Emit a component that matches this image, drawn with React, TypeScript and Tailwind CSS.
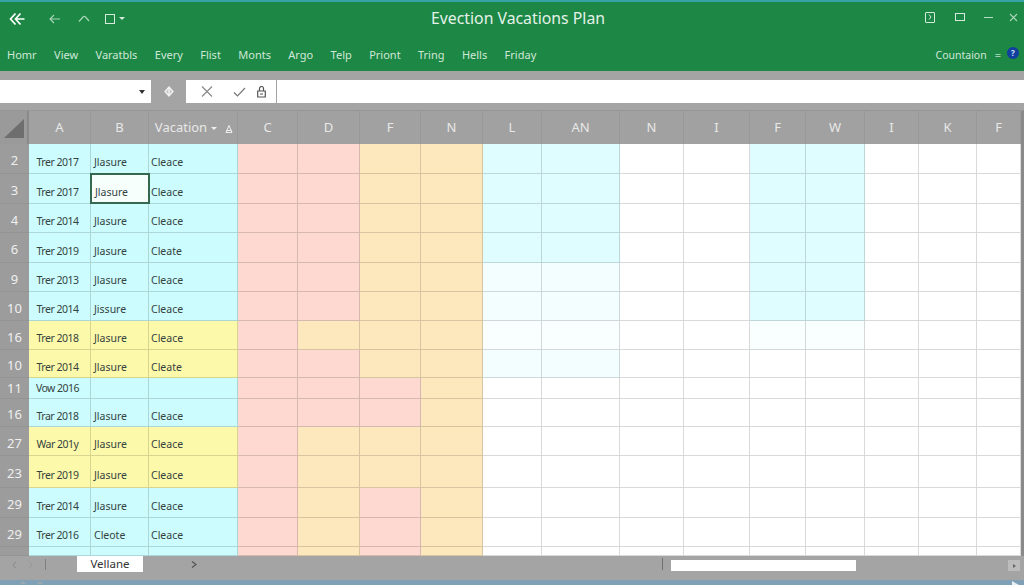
import React from 'react';

const menuItems = ['Homr', 'View', 'Varatbls', 'Every', 'Flist', 'Monts', 'Argo', 'Telp', 'Priont', 'Tring', 'Hells', 'Friday'];
const columns = ['A', 'B', 'Vacation', 'C', 'D', 'F', 'N', 'L', 'AN', 'N', 'I', 'F', 'W', 'I', 'K', 'F'];

const tones: Record<string, string> = {
    c: 'bg-[#ccfcfd]',
    y: 'bg-[#fdf9aa]',
    p: 'bg-[#fdd9d1]',
    o: 'bg-[#fde8be]',
    l: 'bg-[#dffdff]',
    f: 'bg-[#f2feff]',
    v: 'bg-[#f9feff]',
    w: 'bg-white',
};

// left = tone of A, B and Vacation; mid = C D F N; rest = L AN N I F W I K F
const rows = [
    { n: '2', a: 'Trer 2017', b: 'Jlasure', v: 'Cleace', left: 'c', mid: 'ppoo', rest: 'llwwllwww' },
    { n: '3', a: 'Trer 2017', b: 'Jlasure', v: 'Cleace', left: 'c', mid: 'ppoo', rest: 'llwwllwww' },
    { n: '4', a: 'Trer 2014', b: 'Jlasure', v: 'Cleace', left: 'c', mid: 'ppoo', rest: 'llwwllwww' },
    { n: '6', a: 'Trer 2019', b: 'Jlasure', v: 'Cleate', left: 'c', mid: 'ppoo', rest: 'llwwllwww' },
    { n: '9', a: 'Trer 2013', b: 'Jlasure', v: 'Cleace', left: 'c', mid: 'ppoo', rest: 'ffwwllwww' },
    { n: '10', a: 'Trer 2014', b: 'Jissure', v: 'Cleace', left: 'c', mid: 'ppoo', rest: 'ffwwllwww' },
    { n: '16', a: 'Trer 2018', b: 'Jlasure', v: 'Cleace', left: 'y', mid: 'pooo', rest: 'vvwwvvwww' },
    { n: '10', a: 'Trer 2014', b: 'Jlasure', v: 'Cleate', left: 'y', mid: 'ppoo', rest: 'ffwwwwwww' },
    { n: '11', a: 'Vow 2016', b: '', v: '', left: 'c', mid: 'pppo', rest: 'wwwwwwwww' },
    { n: '16', a: 'Trar 2018', b: 'Jlasure', v: 'Cleace', left: 'c', mid: 'pppo', rest: 'wwwwwwwww' },
    { n: '27', a: 'War 201y', b: 'Jlasure', v: 'Cleace', left: 'y', mid: 'pooo', rest: 'wwwwwwwww' },
    { n: '23', a: 'Trer 2019', b: 'Jlasure', v: 'Cleace', left: 'y', mid: 'pooo', rest: 'wwwwwwwww' },
    { n: '29', a: 'Trer 2014', b: 'Jlasure', v: 'Cleace', left: 'c', mid: 'popo', rest: 'wwwwwwwww' },
    { n: '29', a: 'Trer 2016', b: 'Cleote', v: 'Cleace', left: 'c', mid: 'popo', rest: 'wwwwwwwww' },
    { n: '29', a: '', b: '', v: '', left: 'c', mid: 'popo', rest: 'wwwwwwwww' },
];

const lineCell = 'border-r border-b border-black/15';

function TitleIcons() {
    return (
        <div className="flex items-center w-[431px] pl-[9px]">
            <svg width="16" height="14" viewBox="0 0 16 14" fill="none" stroke="#fff" strokeWidth="1.7">
                <path d="M6.5 1.5 1.5 7l5 5.5M11.5 1.5 6.5 7l5 5.500M7 7h8.500" />
            </svg>
            <svg className="ml-[24px]" width="12" height="10" viewBox="0 0 12 10" fill="none" stroke="#a9d6b8" strokeWidth="1.1">
                <path d="M5 1 1 5l4 4M1 5h10" />
            </svg>
            <svg className="ml-[17px]" width="12" height="8" viewBox="0 0 12 8" fill="none" stroke="#a9d6b8" strokeWidth="1.2">
                <path d="M1 6.500 5 2c1-1 1.600-1 2.500 0L11 6" />
            </svg>
            <div className="ml-[15px] w-[10px] h-[10px] border border-[#d6eadd]" />
            <div className="ml-[4px] w-0 h-0 border-x-[3px] border-x-transparent border-t-[3px] border-t-[#d6eadd]" />
        </div>
    );
}

function WindowButtons() {
    return (
        <div className="ml-auto flex items-center pr-[6px] pb-[3px]">
            <div className="w-[10px] h-[11px] border border-[#d6eadd] rounded-[1px] flex items-center justify-center">
                <svg width="4" height="6" viewBox="0 0 4 6" fill="none" stroke="#d6eadd" strokeWidth="1">
                    <path d="m1 .5 2 2.500-2 2.500" />
                </svg>
            </div>
            <div className="ml-[20px] w-[10px] h-[8px] border border-[#d6eadd]" />
            <div className="ml-[19px] w-[9px] h-px bg-[#b9dcc6]" />
            <svg className="ml-[16px]" width="9" height="9" viewBox="0 0 9 9" fill="none" stroke="#a9d6b8" strokeWidth="1.1">
                <path d="m1 1 7 7M8 1 1 8" />
            </svg>
        </div>
    );
}

export default function App() {
    return (
        <div className="w-[1024px] h-[585px] overflow-hidden flex flex-col bg-[#a4a4a4] font-['Noto_Sans',sans-serif]">
            <div className="h-[2px] bg-[#35a3a6]" />

            {/* title + menu */}
            <div className="h-[69px] bg-[#1d8745] text-white flex flex-col">
                <div className="h-[33px] flex items-center">
                    <TitleIcons />
                    <span className="text-[15.800px] leading-none text-[#e4f2e9] pt-[1px]">Evection Vacations Plan</span>
                    <WindowButtons />
                </div>
                <div className="h-[36px] flex items-center pl-[7px] pr-[5px] pt-[5px] text-[11px] text-[#cfe8d8]">
                    <div className="flex items-center gap-[17.400px]">
                        {menuItems.map((item) => (
                            <span key={item}>{item}</span>
                        ))}
                    </div>
                    <span className="ml-auto text-[10.500px]">Countaion</span>
                    <span className="ml-[8px] text-[#9fd0b1]">=</span>
                    <div className="ml-[6px] mb-[5px] w-[12px] h-[12px] rounded-full bg-[#123f9e] text-[8px] leading-[12px] text-center text-[#cfe0ff] font-bold">
                        ?
                    </div>
                </div>
            </div>

            {/* formula bar */}
            <div className="h-[39px] pt-[9px] pb-[7px] flex items-stretch">
                <div className="w-[151px] bg-white flex items-center justify-end pr-[6px]">
                    <div className="w-0 h-0 border-x-[3px] border-x-transparent border-t-[4px] border-t-[#333]" />
                </div>
                <div className="w-[35px] flex items-center justify-center">
                    <svg width="10" height="11" viewBox="0 0 10 11" fill="#c9c9c9" stroke="#f2f2f2" strokeWidth="1.300">
                        <path d="M5 1 9 5.500 5 10 1 5.500zM5 1v9" />
                    </svg>
                </div>
                <div className="w-[90px] bg-white flex items-center">
                    <svg className="ml-[15px]" width="12" height="11" viewBox="0 0 12 11" fill="none" stroke="#8a8a8a" strokeWidth="1.2">
                        <path d="m1 .5 10 10M11 .5l-10 10" />
                    </svg>
                    <svg className="ml-[20px]" width="13" height="10" viewBox="0 0 13 10" fill="none" stroke="#777" strokeWidth="1.2">
                        <path d="m1 5.500 3.500 3.500L12 1" />
                    </svg>
                    <svg className="ml-[11px]" width="9" height="12" viewBox="0 0 9 12" fill="none" stroke="#555" strokeWidth="1.200">
                        <path d="M.7 5h7.600v6H.7zM2.500 5V2.500a2 2 0 0 1 4 0V5M3 8h3" />
                    </svg>
                </div>
                <div className="flex-1 ml-px bg-white" />
            </div>

            {/* sheet */}
            <div className="h-[446px] flex overflow-hidden border-t border-t-[#969696]">
                <div className="w-[1021px] grid grid-cols-[29px_62px_58px_89px_60px_62px_61px_62px_59px_78px_64px_66px_56px_59px_54px_58px_44px] grid-rows-[33px_30px_30px_29px_30px_29px_29px_29px_28px_21px_28px_29px_32px_30px_29px_9px]">
                    <div className="bg-[#9a9a9a] border-r-2 border-[#8a8a8a] flex items-end justify-center pb-[6px]">
                        <div className="w-0 h-0 border-l-[20px] border-l-transparent border-b-[19px] border-b-[#6e6e6e]" />
                    </div>
                    {columns.map((col, i) => (
                        <div key={i} className="bg-[#a1a1a1] border-r border-black/5 flex items-center justify-center pt-[1px] text-[13px] text-[#e8e8e8]">
                            {col === 'Vacation' ? (
                                <>
                                    <span className="ml-[2px]">{col}</span>
                                    <div className="ml-[4px] w-0 h-0 border-x-[3px] border-x-transparent border-t-[3px] border-t-[#f0f0f0]" />
                                    <svg className="ml-[8px] mt-[2px]" width="8" height="8" viewBox="0 0 8 8" fill="none" stroke="#f0f0f0" strokeWidth="1">
                                        <path d="M4 .5 1 7.500h6zM1.500 5.500h5" />
                                    </svg>
                                </>
                            ) : (
                                col
                            )}
                        </div>
                    ))}

                    {rows.map((row, r) => {
                        const short = r === 8;
                        const last = r === 14;
                        const cellText = `flex items-center ${short ? 'pt-[2px]' : 'pt-2'} text-[10.500px] text-[#35433f] whitespace-nowrap`;
                        const left = tones[row.left];
                        return (
                            <React.Fragment key={r}>
                                <div className={`bg-[#9c9c9c] border-b border-black/5 flex justify-center ${last ? 'items-start pt-[6px]' : 'items-center'} ${!last && !short ? 'pt-1' : ''} text-[13px] leading-none text-[#efefef] overflow-hidden`}>
                                    {row.n}
                                </div>
                                <div className={`${left} ${lineCell} ${cellText} justify-center pr-1 tracking-[-0.500px]`}>{row.a}</div>
                                <div className={`${left} ${lineCell} ${cellText} pl-[3px] relative`}>
                                    {row.b}
                                    {r === 1 && <div className="absolute -inset-px -right-[2px] bg-[#f6fffc] border-2 border-[#34694f] flex items-center pl-[3px] pt-[8px]">{row.b}</div>}
                                </div>
                                <div className={`${left} ${lineCell} ${cellText} pl-[2px]`}>{row.v}</div>
                                {row.mid.split('').map((t, i) => (
                                    <div key={`m${i}`} className={`${tones[t]} ${lineCell}`} />
                                ))}
                                {row.rest.split('').map((t, i) => (
                                    <div key={`e${i}`} className={`${tones[t]} ${lineCell}`} />
                                ))}
                            </React.Fragment>
                        );
                    })}
                </div>
                <div className="flex-1 bg-[#8a8a8a]" />
            </div>

            {/* sheet tabs + scrollbar */}
            <div className="h-[24px] bg-[#a4a4a4] flex items-start">
                <div className="h-[17px] flex items-center pl-[12px]">
                    <svg width="5" height="8" viewBox="0 0 5 8" fill="none" stroke="#888" strokeWidth="1">
                        <path d="M4 .5 1 4l3 3.500" />
                    </svg>
                    <svg className="ml-[11px]" width="5" height="8" viewBox="0 0 5 8" fill="none" stroke="#999" strokeWidth="1">
                        <path d="m1 .5 3 3.500-3 3.500" />
                    </svg>
                    <div className="ml-[12px] w-px h-[11px] bg-[#7e7e7e]" />
                </div>
                <div className="ml-[31px] w-[66px] h-[16px] bg-white text-[11.500px] leading-[16px] text-center text-[#333]">Vellane</div>
                <svg className="ml-[48px] mt-[5px]" width="6" height="7" viewBox="0 0 6 7" fill="none" stroke="#555" strokeWidth="1.3">
                    <path d="m1 .5 4 3-4 3" />
                </svg>
                <div className="ml-[465px] mt-[2px] w-px h-[12px] bg-[#707070]" />
                <div className="ml-[8px] mt-[4px] w-[185px] h-[11px] bg-white" />
                <div className="ml-auto mr-[4px] mt-[4px] w-[12px] h-[11px] bg-[#bcbcbc] flex items-center justify-center">
                    <div className="w-0 h-0 border-y-[2px] border-y-transparent border-l-[3px] border-l-[#666]" />
                </div>
            </div>

            {/* status strip */}
            <div className="flex-1 bg-[#7fa0b6] flex items-center pr-[5px]">
                <div className="ml-[20px] w-0 h-0 border-x-[3px] border-x-transparent border-b-[3px] border-b-[#9aa8b2]" />
                <div className="ml-[11px] w-0 h-0 border-x-[3px] border-x-transparent border-b-[3px] border-b-[#9aa8b2]" />
                <div className="ml-auto w-0 h-0 border-l-[7px] border-l-[#e8eef2] border-t-[4px] border-t-transparent" />
            </div>
        </div>
    );
}
